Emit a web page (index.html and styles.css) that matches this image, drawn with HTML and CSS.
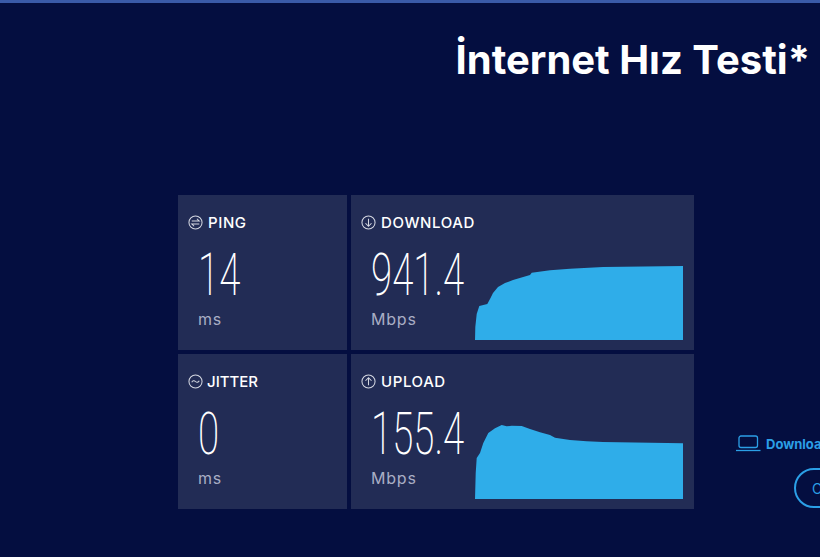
FILE: index.html
```html
<!DOCTYPE html>
<html lang="tr">
	<head>
		<meta charset="UTF-8" />
		<meta name="viewport" content="width=device-width, initial-scale=1.0" />
		<title>İnternet Hız Testi</title>
		<link rel="stylesheet" href="styles.css">
	</head>
	<body>
		<div class="topbar"></div>
		<h1 class="title">İnternet Hız Testi*</h1>
		<div class="main">
			<div class="results">
				<div class="card">
					<div class="info">
						<div class="label">
							<svg class="icon" viewBox="0 0 16 16"><circle cx="8" cy="8" r="7"/><path d="M4 6.500h8L9.500 4M12 9.500H4L6.500 12"/></svg>
							<span>PING</span>
						</div>
						<div class="value"><span>14</span></div>
						<div class="unit">ms</div>
					</div>
				</div>
				<div class="card">
					<div class="info">
						<div class="label">
							<svg class="icon" viewBox="0 0 16 16"><circle cx="8" cy="8" r="7"/><path d="M8 4v8M4.800 8.800 8 12l3.200-3.200"/></svg>
							<span>DOWNLOAD</span>
						</div>
						<div class="value"><span>941.4</span></div>
						<div class="unit">Mbps</div>
					</div>
					<svg class="chart" viewBox="0 0 208 74">
						<path d="M0 74 .3 61 1.700 48 4.300 40 12.300 38 15 33 18 27 23 21 30 17 38 14 55 9 56.700 6.700 75 4.300 95 2.700 128 1 208 0V74Z"/>
					</svg>
				</div>
				<div class="card">
					<div class="info">
						<div class="label label-tight">
							<svg class="icon" viewBox="0 0 16 16"><circle cx="8" cy="8" r="7"/><path d="M4 8.800C5 6.800 6.800 6.800 8 8s3 1.200 4-.8"/></svg>
							<span>JITTER</span>
						</div>
						<div class="value"><span>0</span></div>
						<div class="unit">ms</div>
					</div>
				</div>
				<div class="card">
					<div class="info">
						<div class="label">
							<svg class="icon" viewBox="0 0 16 16"><circle cx="8" cy="8" r="7"/><path d="M8 12V4M4.800 7.200 8 4l3.200 3.200"/></svg>
							<span>UPLOAD</span>
						</div>
						<div class="value"><span>155.4</span></div>
						<div class="unit">Mbps</div>
					</div>
					<svg class="chart" viewBox="0 0 208 74">
						<path d="M0 74 .7 48 1.700 33 5 28 8.300 18 13.300 8 20 3.300 26.700 0 31.700 1.300 36.700 .7 46.700 1 55 4 65 7.300 75 10 80 12.700 95 15 111.700 16.300 128 17 208 18.300V74Z"/>
					</svg>
				</div>
			</div>
			<div class="side">
				<a class="app-link" href="#">
					<svg class="laptop" viewBox="0 0 25 17"><rect x="3" y="1" width="18.500" height="11.500" rx="2"/><path d="M0 15.500h24.500"/></svg>
					<span>Download App</span>
				</a>
				<button class="more">O</button>
			</div>
		</div>
	</body>
</html>
```

FILE: styles.css
```css
html, body {
	height: 100%;
}
body {
	margin: 0;
	background-color: #040e40;
	color: #fff;
	font-family: Inter, "Liberation Sans", sans-serif;
	overflow: hidden;
}
.topbar {
	height: 3px;
	background-color: #3a5aa8;
}
.title {
	margin: 30px 10px 0 0;
	height: 54px;
	font-size: 40px;
	line-height: 54px;
	font-weight: 700;
	text-align: right;
}
.main {
	display: flex;
	align-items: flex-end;
	width: 1000px;
	margin: 108px 0 0 178px;
}
.results {
	display: grid;
	grid-template-columns: 169px 343px;
	grid-template-rows: 155px 155px;
	gap: 4px;
}
.card {
	display: flex;
	justify-content: space-between;
	background-color: #222c55;
	padding: 0 11px 10px 10px;
}
.info {
	min-width: 0;
	padding-top: 19px;
}
.label {
	display: flex;
	align-items: center;
	gap: 5px;
	height: 16px;
	font-size: 15px;
	font-weight: 500;
	letter-spacing: 0.6px;
}
.label-tight {
	gap: 4px;
	letter-spacing: 0;
}
.icon {
	flex: none;
	width: 15px;
	height: 15px;
	fill: none;
	stroke: #d5d8e2;
	stroke-width: 1.100;
}
.value {
	margin: 10px 0 0 10px;
	height: 70px;
	font-family: Roboto, sans-serif;
	font-size: 60px;
	line-height: 70px;
	font-weight: 200;
	white-space: nowrap;
}
.value span {
	display: inline-block;
	transform: scaleX(0.64);
	transform-origin: left;
}
.unit {
	margin: -1px 0 0 10px;
	font-size: 16px;
	line-height: 20px;
	letter-spacing: 0.8px;
	color: #a9aec4;
}
.chart {
	flex: none;
	align-self: flex-end;
	width: 208px;
	height: 74px;
	fill: #2fade9;
}
.side {
	display: flex;
	flex-direction: column;
	margin: 0 0 0 42px;
	padding-bottom: 1px;
}
.app-link {
	display: flex;
	align-items: center;
	gap: 5px;
	color: #2b9fe6;
	font-size: 13px;
	font-weight: 700;
	text-decoration: none;
	white-space: nowrap;
}
.laptop {
	width: 25px;
	height: 17px;
	fill: none;
	stroke: #2b9fe6;
	stroke-width: 1.300;
}
.more {
	margin: 16px 0 0 58px;
	width: 80px;
	height: 40px;
	padding: 0 0 0 16px;
	border: 2px solid #2b9fe6;
	border-radius: 20px;
	background: none;
	color: #2b9fe6;
	font-family: inherit;
	font-size: 14px;
	text-align: left;
}
```
